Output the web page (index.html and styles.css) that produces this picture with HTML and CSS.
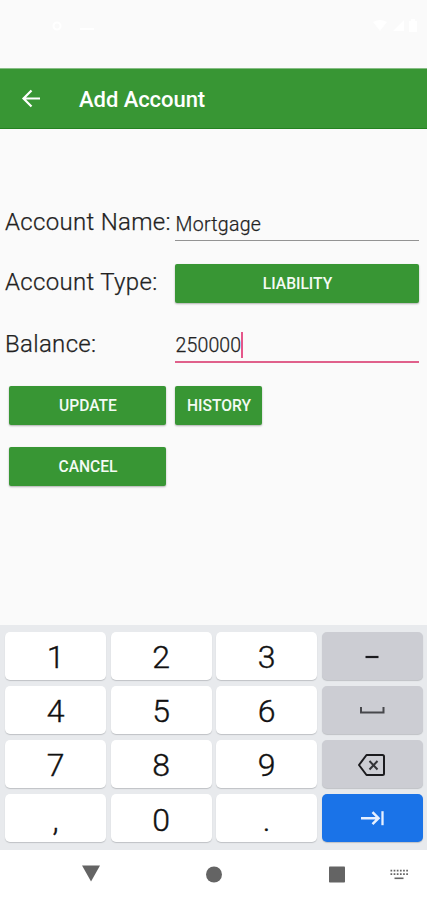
FILE: index.html
```
<!DOCTYPE html>
<html lang="en">
<head>
<meta charset="utf-8">
<meta name="viewport" content="width=device-width, initial-scale=1">
<title>Add Account</title>
<link rel="stylesheet" href="styles.css">
</head>
<body>
<div class="screen">
  <div class="status">
    <svg class="status-left" width="48" height="14" viewBox="0 0 48 14"><circle cx="6" cy="7" r="3.5" fill="none" stroke="#fff" stroke-width="2"/><path d="M29 9h14v2H29z" fill="#fff"/></svg>
    <svg width="48" height="14" viewBox="0 0 48 14"><path d="M0 3Q7-1 14 3L7 12zM20 12L31 1v11zM36 2h2V0h4v2h2v11h-8z" fill="#fff"/></svg>
  </div>
  <header class="appbar">
    <svg class="back" width="20" height="20" viewBox="0 0 20 20"><path d="M19 9.500H2.500M10.500 1.500L2.500 9.500l8 8" fill="none" stroke="#fff" stroke-width="2.200"/></svg>
    <h1 class="title">Add Account</h1>
  </header>
  <main class="form">
    <div class="row row-name">
      <span class="label">Account Name:</span>
      <div class="field"><span class="value">Mortgage</span></div>
    </div>
    <div class="row row-type">
      <span class="label">Account Type:</span>
      <button class="btn btn-type">LIABILITY</button>
    </div>
    <div class="row row-balance">
      <span class="label">Balance:</span>
      <div class="field field-active"><span class="value value-num">250000</span><span class="caret"></span></div>
    </div>
    <div class="actions">
      <button class="btn">UPDATE</button>
      <button class="btn btn-history">HISTORY</button>
      <button class="btn">CANCEL</button>
    </div>
  </main>
  <section class="keyboard">
    <div class="key">1</div><div class="key">2</div><div class="key">3</div>
    <div class="key key-fn"><svg width="30" height="24" viewBox="0 0 30 24"><path d="M8.5 12h13" stroke="#1b1b1e" stroke-width="2.2"/></svg></div>
    <div class="key">4</div><div class="key">5</div><div class="key">6</div>
    <div class="key key-fn"><svg width="30" height="24" viewBox="0 0 30 24"><path d="M4 8v5.500h22.500V8" fill="none" stroke="#47484c" stroke-width="2"/></svg></div>
    <div class="key">7</div><div class="key">8</div><div class="key">9</div>
    <div class="key key-fn"><svg width="30" height="24" viewBox="0 0 30 24"><path d="M9.500 2h16q1.500 0 1.500 1.500v17q0 1.500-1.500 1.500h-16L2 12z" fill="none" stroke="#1b1b1e" stroke-width="2" stroke-linejoin="round"/><path d="M12.500 8l8 8.500M20.500 8l-8 8.500" stroke="#333438" stroke-width="2"/></svg></div>
    <div class="key key-mark">,</div><div class="key">0</div><div class="key key-mark">.</div>
    <div class="key key-next"><svg width="30" height="24" viewBox="0 0 30 24"><path d="M4 10.200h17.500M15.500 4.200l6 6-6 6" fill="none" stroke="#e6f0ff" stroke-width="2.500"/><path d="M25.500 3.200v14" stroke="#e6f0ff" stroke-width="2.300"/></svg></div>
  </section>
  <nav class="navbar">
    <svg class="nav-icons" width="427" height="50" viewBox="0 0 427 50">
      <g fill="#646464">
        <path d="M82 15.500h18l-9 16z"/>
        <circle cx="214" cy="24.500" r="8"/>
        <rect x="329" y="16.500" width="16" height="16" rx="0.800"/>
        <path d="M394.500 27.500h9v1.600h-9z"/>
      </g>
      <path d="M390.500 20.700H408M390.500 24.200H408" stroke="#646464" stroke-width="1.700" stroke-dasharray="1.700 1.450"/>
    </svg>
  </nav>
</div>
</body>
</html>
```
FILE: styles.css
```
* { box-sizing: border-box; }
body { margin: 0; font-family: Roboto, "Liberation Sans", sans-serif; background: #fafafa; }
svg { display: block; }
.screen { width: 427px; height: 900px; display: flex; flex-direction: column; background: #fafafa; overflow: hidden; }
.status { height: 68px; flex: none; display: flex; justify-content: space-between; padding: 19px 6px 0 51px; }
.appbar { height: 61px; flex: none; display: flex; align-items: center; padding: 1px 0 0 21px; background: #389634; border-top: 1px solid #86bd84; border-bottom: 1px solid #238220; }
.back { margin-right: 38px; }
.title { margin: 2px 0 0; font-size: 22px; line-height: 28px; font-weight: 500; color: #fff; letter-spacing: -0.05px; }
.form { flex: 1; padding: 71px 8px 0 5px; }
.row { display: grid; grid-template-columns: 170px 1fr; }
.row-name { height: 64px; }
.row-type { height: 61px; }
.row-balance { height: 61px; }
.label { font-size: 24px; font-weight: 300; line-height: 28px; letter-spacing: 0.32px; color: #222; -webkit-text-stroke: 0.25px #222; padding-top: 8px; white-space: nowrap; }
.row-type .label { padding-top: 4px; }
.row-balance .label { padding-top: 5px; }
.field { height: 41px; display: flex; align-items: flex-start; padding: 12px 0 0 0.5px; border-bottom: 1px solid #939393; font-size: 19.5px; font-weight: 300; line-height: 24px; color: #222; -webkit-text-stroke: 0.25px #222; letter-spacing: 0.3px; }
.value { padding-top: 1px; }
.value-num { letter-spacing: 0.15px; }
.field-active { height: 38px; padding-top: 8px; border-bottom: 2px solid #e0608b; }
.caret { width: 2px; height: 26px; margin-top: -1px; background: #e5568a; }
.btn { height: 39px; border: 0; border-radius: 2px; padding: 2px 0 0 1px; background: #389634; color: #f4fbf4; font: 500 15.6px/37px Roboto, sans-serif; box-shadow: 0 1px 2px rgba(0,0,0,.3); }
.actions { display: grid; grid-template-columns: 157px 87px; gap: 22px 9px; padding-left: 4px; }
.keyboard { height: 225px; flex: none; display: grid; grid-template-columns: repeat(4, 1fr); grid-auto-rows: 47.500px; gap: 6.600px 4.500px; padding: 7px 4.500px 0 5px; background: #e8eaed; }
.key { display: flex; align-items: center; justify-content: center; border-radius: 5px; background: #fff; color: #111; font-size: 32px; font-weight: 300; -webkit-text-stroke: 0.4px #111; line-height: 48px; padding-top: 3px; box-shadow: 0 1px 1px #bfc1c5; }
.key-fn { background: #cccdd3; }
.key-next { background: #1a73e8; }
.navbar { height: 50px; flex: none; background: #fff; }
```
